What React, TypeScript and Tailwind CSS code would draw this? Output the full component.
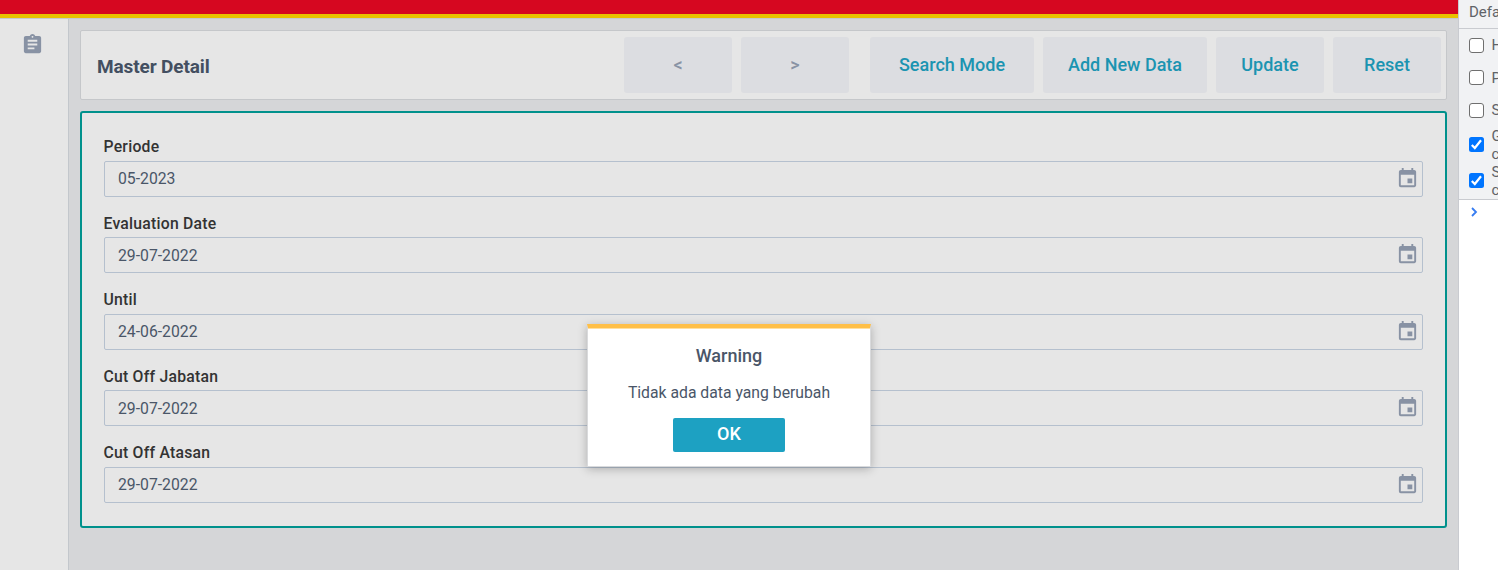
import { MdAssignment, MdEvent } from "react-icons/md";

const fields = [
  { label: "Periode", value: "05-2023", row: "h-[77px]", labelBox: "h-[24px]", valueBox: "" },
  { label: "Evaluation Date", value: "29-07-2022", row: "h-[76px]", labelBox: "h-[23px]", valueBox: "pt-[2px]" },
  { label: "Until", value: "24-06-2022", row: "h-[77px]", labelBox: "h-[24px]", valueBox: "" },
  { label: "Cut Off Jabatan", value: "29-07-2022", row: "h-[76px]", labelBox: "h-[23px]", valueBox: "pt-[2px]" },
  { label: "Cut Off Atasan", value: "29-07-2022", row: "h-[77px]", labelBox: "h-[24px]", valueBox: "" },
];

function ToolButton({ label, className }: { label: string; className: string }) {
  return (
    <button className={`h-14 shrink-0 rounded-[3px] bg-[#dcdde1] pb-[2px] text-[18px] font-medium ${className}`}>
      {label}
    </button>
  );
}

function Field({ label, value, row, labelBox, valueBox }: (typeof fields)[number]) {
  return (
    <div className={`${row} shrink-0`}>
      <div className={`${labelBox} -ml-[0.5px] text-[15.75px] leading-[20px] font-medium tracking-[0.23px] text-[#333333]`}>
        {label}
      </div>
      <div className="flex h-9 items-center justify-between rounded-[2px] border border-[#b5c0ce] pr-[3px] pl-[13px]">
        <span className={`text-[15.75px] leading-[20px] text-[#4a5668] ${valueBox}`}>{value}</span>
        <MdEvent className="mb-px size-[23px] text-[#8892a4]" />
      </div>
    </div>
  );
}

function Check({ checked }: { checked?: boolean }) {
  return checked ? (
    <span className="flex size-[15px] shrink-0 items-center justify-center rounded-[2.5px] bg-[#0075ff]">
      <svg viewBox="0 0 15 15" className="size-[15px]" fill="none" stroke="white" strokeWidth="2.2">
        <path d="M2.8 8 L5.8 11 L12 3.2" />
      </svg>
    </span>
  ) : (
    <span className="size-[15px] shrink-0 rounded-[3px] border border-[#6f6f6f] bg-white" />
  );
}

function Option({ lines, checked, className }: { lines: string[]; checked?: boolean; className: string }) {
  return (
    <div className={`flex items-center gap-[7.5px] pl-[10px] text-[15px] leading-[18px] ${className}`}>
      <Check checked={checked} />
      <div className={checked ? "pt-px" : ""}>
        {lines.map((line) => (
          <div key={line}>{line}</div>
        ))}
      </div>
    </div>
  );
}

export default function App() {
  return (
    <div className="relative flex h-[570px] w-[1498px] overflow-hidden bg-[#d5d6d8] font-['Roboto',sans-serif]">
      <div className="flex w-[1458px] shrink-0 flex-col">
        <div className="h-[18px] shrink-0 border-b-4 border-[#e8c200] bg-[#d60720]" />
        <div className="flex flex-1 border-t border-[#c6cacf]">
          <aside className="w-[69px] shrink-0 border-r border-[#c3c7cc] bg-[#e6e6e6] pt-[14px] pl-[21px]">
            <MdAssignment className="size-[23px] text-[#8892a4]" />
          </aside>
          <main className="flex flex-1 flex-col gap-[11px] pt-[11px] pr-[11px] pl-[11px]">
            <header className="flex h-[70px] shrink-0 items-center rounded-[2px] border border-[#c5c7ca] bg-[#e6e6e6] pr-[5px] pl-[16px]">
              <h1 className="flex-1 pt-[4px] text-[19px] font-bold tracking-[-0.12px] text-[#434f61]">Master Detail</h1>
              <div className="flex gap-[9px]">
                <ToolButton label="<" className="w-[108px] text-[#8892a4]" />
                <ToolButton label=">" className="mr-[12px] w-[108px] text-[#8892a4]" />
                <ToolButton label="Search Mode" className="w-[164px] text-[#1b94b1]" />
                <ToolButton label="Add New Data" className="w-[164px] text-[#1b94b1]" />
                <ToolButton label="Update" className="w-[108px] text-[#1b94b1]" />
                <ToolButton label="Reset" className="w-[108px] text-[#1b94b1]" />
              </div>
            </header>
            <section className="flex h-[417px] flex-col rounded-[3px] border-2 border-[#00918c] bg-[#e6e6e6] px-[22px] pt-[24px]">
              {fields.map((f) => (
                <Field key={f.label} {...f} />
              ))}
            </section>
          </main>
        </div>
      </div>

      <aside className="flex w-[40px] shrink-0 flex-col overflow-hidden border-l border-[#c9cbd0] bg-white whitespace-nowrap text-[#5f6368]">
        <div className="h-[200px] shrink-0 border-b border-[#c9cbd0] bg-[#f1f2f4]">
          <div className="h-[29px] border-b border-[#c9cbd0] pt-[3px] pl-[10px] text-[15px] leading-[18px]">Default</div>
          <Option lines={["Hide"]} className="h-[32px]" />
          <Option lines={["Preserve"]} className="h-[33px]" />
          <Option lines={["Selected"]} className="h-[32px]" />
          <Option lines={["Group", "console"]} checked className="h-[36px]" />
          <Option lines={["Show", "console"]} checked className="h-[36px]" />
        </div>
        <svg viewBox="0 0 8 10" className="mt-[7px] ml-[11px] h-[10px] w-[8px]" fill="none" stroke="#367cf1" strokeWidth="1.8">
          <path d="M2 1 L6 5 L2 9" />
        </svg>
      </aside>

      <div className="absolute top-[324px] left-[587px] flex h-[143px] w-[284px] flex-col items-center border border-t-4 border-[#d9dadc] border-t-[#ffbf47] bg-white bg-clip-padding text-[#4a5668] shadow-[0_2px_9px_rgba(0,0,0,0.25)]">
        <div className="h-px w-full bg-[#ffdf9f]" />
        <div className="mt-[16px] text-[18px] leading-[22px] font-medium">Warning</div>
        <div className="mt-[16px] text-[15.75px] leading-[20px]">Tidak ada data yang berubah</div>
        <button className="mt-[15px] h-[34px] w-[112px] rounded-[2px] bg-[#1da1c2] pb-[2px] text-[18px] leading-[32px] font-medium text-white">OK</button>
      </div>
    </div>
  );
}
